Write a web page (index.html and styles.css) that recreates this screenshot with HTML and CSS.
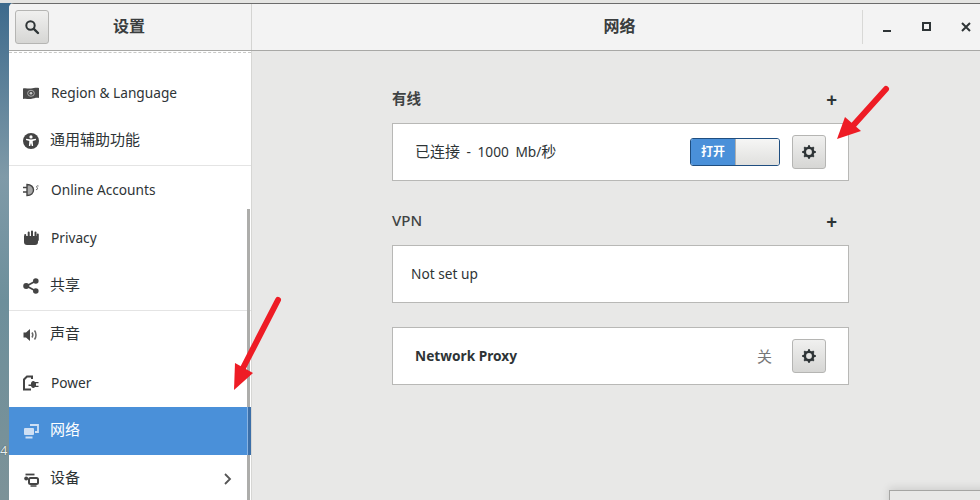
FILE: index.html
```html
<!DOCTYPE html>
<html lang="zh">
<head>
<meta charset="utf-8">
<title>设置 - 网络</title>
<link rel="stylesheet" href="styles.css">
</head>
<body>
<div class="strip"></div>
<div class="desk">
  <div class="wallpaper"><span class="wall-num">4</span></div>
  <div class="window">
    <header class="titlebar">
      <div class="tb-left">
        <button class="btn search-btn" aria-label="搜索">
          <svg width="16" height="16" viewBox="0 0 16 16"><circle cx="6.500" cy="6.500" r="4.200" fill="none" stroke="#2e3436" stroke-width="2"/><path d="M9.800 9.800L14 14" stroke="#2e3436" stroke-width="2.400" stroke-linecap="round"/></svg>
        </button>
        <span class="tb-title side-title">设置</span>
      </div>
      <div class="tb-right">
        <span class="tb-title main-title">网络</span>
        <div class="wm">
          <svg class="wm-i" width="12" height="12" viewBox="0 0 12 12"><rect x="2" y="9" width="8" height="2" fill="#2e3436"/></svg>
          <svg class="wm-i" width="12" height="12" viewBox="0 0 12 12"><rect x="2" y="2" width="7" height="7" fill="none" stroke="#2e3436" stroke-width="2"/></svg>
          <svg class="wm-i" width="12" height="12" viewBox="0 0 12 12"><path d="M2 2L10 10M10 2L2 10" stroke="#2e3436" stroke-width="2"/></svg>
        </div>
      </div>
    </header>
    <div class="body">
      <nav class="sidebar">
        <div class="row">
          <svg class="ic" width="16" height="16" viewBox="0 0 16 16"><path d="M0 3.500C3 2.500 5 4 8 3.500S13 2.500 16 3v10c-3-.5-5 .5-8 1s-5-1-8 0z" fill="#4a4a4a"/><circle cx="8" cy="8.300" r="1.300" fill="#ccc"/><path d="M4.600 8.300a3.400 3 0 0 1 6.800 0a3.400 3 0 0 1-6.800 0" fill="none" stroke="#aaa"/></svg>
          <span>Region &amp; Language</span>
        </div>
        <div class="row sep">
          <svg class="ic" width="16" height="16" viewBox="0 0 16 16"><circle cx="8" cy="8" r="8" fill="#444"/><circle cx="8" cy="3.900" r="1.600" fill="#fff"/><path d="M3.200 5.800L8 6.600l4.800-.8.3 1.300-3.400 1 .4 5h-1.300L8 10l-.8 3.100H5.900l.4-5-3.400-1z" fill="#fff"/></svg>
          <span class="cjk">通用辅助功能</span>
        </div>
        <div class="row">
          <svg class="ic" width="16" height="16" viewBox="0 0 16 16"><path d="M0 5.500h4M0 10h4" stroke="#444" stroke-width="1.600"/><path d="M4 2.500v11C8 13.500 10.500 11 10.500 8S8 2.500 4 2.500z" fill="#a8a8a8" stroke="#444" stroke-width="1.400"/><path d="M15.500 4c-1.500-.6-2.500.4-1.500 1.500s.5 2.500-1 2" fill="none" stroke="#666"/></svg>
          <span>Online Accounts</span>
        </div>
        <div class="row">
          <svg class="ic" width="16" height="16" viewBox="0 0 16 16"><path d="M1 6h14v6c0 2-1 3-3 3H4c-2 0-3-1-3-3z" fill="#444"/><path d="M2.200 10V5M5.700 8V2.500M9 8V1.500M12.500 8V2.500M14.800 10V4.500" stroke="#444" stroke-width="2" stroke-linecap="round"/></svg>
          <span>Privacy</span>
        </div>
        <div class="row sep">
          <svg class="ic" width="16" height="16" viewBox="0 0 16 16"><path d="M12.800 3L3.500 8l9.300 5" fill="none" stroke="#444" stroke-width="1.700"/><circle cx="12.800" cy="3" r="2.800" fill="#444"/><circle cx="3.200" cy="8" r="3" fill="#444"/><circle cx="12.800" cy="13" r="2.800" fill="#444"/></svg>
          <span class="cjk">共享</span>
        </div>
        <div class="row">
          <svg class="ic" width="16" height="16" viewBox="0 0 16 16"><path d="M0.500 5.500h2.500L7 2v12L3 10.500H.5z" fill="#444"/><path d="M9 5.500c1 1.500 1 3.500 0 5M11.500 3.500c2 2.500 2 6.500 0 9" fill="none" stroke="#666" stroke-width="1.500"/></svg>
          <span class="cjk">声音</span>
        </div>
        <div class="row">
          <svg class="ic" width="16" height="16" viewBox="0 0 16 16"><path d="M9 4V1.500H4L1 4.500V14.500H8" fill="none" stroke="#444" stroke-width="2"/><path d="M8 8a2.500 3.500 0 0 1 4-1h3.500v1.300H13v2.400h2.500V12H12a2.500 3.500 0 0 1-4-1H5.500V9.500H8z" fill="#444"/></svg>
          <span>Power</span>
        </div>
        <div class="row selected">
          <svg class="ic" width="16" height="16" viewBox="0 0 16 16"><path d="M7 2h8v7h-3" fill="none" stroke="#cfe0f4" stroke-width="1.800"/><rect x="1" y="5" width="10" height="7" rx="1" fill="#cfe0f4"/><path d="M2.500 14.500h7" stroke="#cfe0f4" stroke-width="2"/></svg>
          <span class="cjk">网络</span>
          <i class="sel-bar"></i>
        </div>
        <div class="row">
          <svg class="ic" width="16" height="16" viewBox="0 0 16 16"><path d="M2.500 3.500h9" stroke="#444" stroke-width="1.800"/><circle cx="3.200" cy="7.500" r="2" fill="#444"/><rect x="6" y="7" width="9" height="6" rx="1.500" fill="none" stroke="#444" stroke-width="2"/><path d="M7.500 15h6" stroke="#444" stroke-width="1.500"/></svg>
          <span class="cjk">设备</span>
          <svg class="chev" width="10" height="12" viewBox="0 0 10 12"><path d="M2 1l5 5-5 5" fill="none" stroke="#555" stroke-width="1.800"/></svg>
        </div>
        <div class="dash"></div>
        <div class="scrollbar"></div>
      </nav>
      <main class="content">
        <div class="head"><h2 class="cjk">有线</h2><span class="plus">+</span></div>
        <section class="frame">
          <span class="label spaced"><span class="cjk">已连接</span> - 1000 Mb/<span class="cjk">秒</span></span>
          <div class="toggle"><span class="on">打开</span><span class="knob"></span></div>
          <button class="btn gear-btn" aria-label="设置">
            <svg width="16" height="16" viewBox="0 0 16 16"><use href="#gear"/></svg>
          </button>
        </section>
        <div class="head vpn"><h2>VPN</h2><span class="plus">+</span></div>
        <section class="frame"><span class="label notset">Not set up</span></section>
        <section class="frame proxy">
          <span class="label strong">Network Proxy</span>
          <span class="off">关</span>
          <button class="btn gear-btn" aria-label="设置">
            <svg width="16" height="16" viewBox="0 0 16 16"><use href="#gear"/></svg>
          </button>
        </section>
      </main>
    </div>
  </div>
</div>
<div class="popup"></div>
<svg class="defs" width="0" height="0">
  <defs>
    <g id="gear">
      <circle cx="8" cy="8" r="4.200" fill="none" stroke="#2e3436" stroke-width="2.600"/>
      <path d="M8 1.200v13.600M1.200 8h13.600M3.200 3.200l9.600 9.600M12.800 3.200L3.200 12.800" stroke="#2e3436" stroke-width="2" stroke-dasharray="2.500 9 2.500"/>
    </g>
  </defs>
</svg>
<svg class="arrow arrow-a" width="60" height="60" viewBox="0 0 60 60"><path d="M46 4L10 44" stroke="#ee1c25" stroke-width="6" stroke-linecap="round"/><path d="M-3 54L5 32L21 46z" fill="#ee1c25"/></svg>
<svg class="arrow arrow-b" width="60" height="100" viewBox="0 0 60 100"><path d="M50 5L14 75" stroke="#ee1c25" stroke-width="6" stroke-linecap="round"/><path d="M6 95L7 68L25 78z" fill="#ee1c25"/></svg>
</body>
</html>
```
FILE: styles.css
```css
* { box-sizing: border-box; }
html, body { margin: 0; padding: 0; width: 980px; height: 500px; overflow: hidden; }
body {
  position: relative;
  background: #e8e8e7;
  font-family: "Noto Sans", "Noto Sans CJK SC", sans-serif;
  font-size: 13.7px;
  color: #2e3436;
}
.strip { height: 3px; background: #e4e4e2; }
.desk { display: flex; height: 497px; background: #3d6a8c; }
.wallpaper {
  position: relative;
  flex: 0 0 9px;
  background: linear-gradient(180deg, #3d6a8c 0%, #7f9aa8 35%, #6d8f9b 60%, #7c9298 100%);
}
.wall-num { display: block; position: absolute; left: 0; top: 439px; width: 9px; font-size: 13px; line-height: 16px; color: #e8eeee; text-shadow: 0 0 1px #222; }
.window { flex: 1; display: flex; flex-direction: column; min-width: 0; background: #e8e8e7; border-top-left-radius: 5px; overflow: hidden; }
.titlebar {
  display: flex;
  height: 48px;
  flex: 0 0 48px;
  background: #f3f3f3;
  border-top: 1px solid #6b6b6b;
  border-bottom: 1px solid #a8a8a6;
}
.tb-left {
  position: relative;
  flex: 0 0 243px;
  display: flex;
  align-items: center;
  padding-left: 6px;
  border-right: 1px solid #d4d4d2;
}
.tb-right { flex: 1; display: flex; align-items: center; }
.tb-title { font-size: 16px; font-weight: 700; color: #3a3d3e; line-height: 20px; }
.side-title { position: absolute; left: 104px; top: 12px; }
.main-title { flex: 1; text-align: center; padding-left: 125px; margin-top: -2px; }
.wm {
  flex: 0 0 118px;
  height: 34px;
  display: flex;
  align-items: center;
  justify-content: space-between;
  padding: 0 8px 0 18px;
  border-left: 1px solid #d8d8d6;
}
.wm-i { display: block; }
.btn {
  display: flex;
  align-items: center;
  justify-content: center;
  width: 34px;
  height: 34px;
  padding: 0;
  border: 1px solid #b5b5b3;
  border-radius: 3px;
  background: linear-gradient(180deg, #f0f0ef, #d6d6d4);
}
.body { flex: 1; display: flex; min-height: 0; }
.sidebar {
  position: relative;
  flex: 0 0 243px;
  height: 100%;
  overflow: hidden;
  padding-top: 18px;
  background: #fff;
  border-right: 1px solid #d6d6d4;
}
.dash {
  position: absolute;
  left: 0; right: 0; top: 1px;
  border-top: 1px dashed #c9c9c7;
}
.row {
  position: relative;
  display: flex;
  align-items: center;
  height: 48px;
  padding-left: 14px;
  color: #2e3436;
}
.row.sep { height: 49px; padding-bottom: 1px; border-bottom: 1px solid #e4e4e4; }
.row > span { margin-left: 12px; margin-bottom: 2px; }
.row > span.cjk { margin-left: 11px; margin-bottom: 5px; }
.cjk { font-size: 15px; }
.ic { flex: 0 0 16px; display: block; }
.selected { background: #4a90d9; color: #fff; }
.sel-bar { position: absolute; right: 0; top: 0; bottom: 0; width: 4px; background: #3c6fa8; border-left: 1px solid #8ab4e2; z-index: 1; }
.chev { position: absolute; left: 214px; top: 18px; }
.scrollbar { position: absolute; right: 1px; top: 158px; bottom: 0; width: 3px; background: #adadab; }
.content { flex: 1; padding: 0 0 0 140px; min-width: 0; }
.head {
  display: flex;
  align-items: center;
  justify-content: space-between;
  width: 457px;
  height: 20px;
  margin-top: 38px;
  padding-right: 12px;
}
.head h2 { margin: -2px 0 0; font-size: 14.500px; font-weight: 700; color: #3f4344; line-height: 20px; }
.head.vpn { margin-top: 30px; }
.head.vpn h2 { font-weight: 500; font-size: 15px; }
.plus { font-size: 19px; font-weight: 700; color: #2e3436; line-height: 20px; margin-top: 1px; }
.frame {
  display: flex;
  align-items: center;
  width: 457px;
  height: 58px;
  margin-top: 14px;
  padding: 0 22px;
  background: #fff;
  border: 1px solid #b8b8b6;
}
.head + .frame { margin-top: 14px; }
.proxy { margin-top: 24px; }
.label { flex: 1; color: #2e3436; margin-top: -2px; }
.label.spaced { word-spacing: 3px; margin-top: -4px; }
.notset { margin-left: -4px; }
.strong { font-weight: 700; }
.off { color: #777; margin-right: 20px; font-size: 15px; margin-top: -2px; }
.toggle {
  display: flex;
  width: 90px;
  height: 28px;
  margin-right: 12px;
  border: 1px solid #1f4e80;
  border-radius: 3px;
  overflow: hidden;
}
.on {
  flex: 0 0 44px;
  background: #4a90d9;
  color: #fff;
  font-size: 12px;
  font-weight: 700;
  text-align: center;
  line-height: 26px;
}
.knob { flex: 1; background: linear-gradient(180deg, #f6f6f5, #e0e0de); border-left: 1px solid #b0b0ae; }
.popup {
  position: absolute;
  left: 889px; top: 490px;
  width: 100px; height: 20px;
  background: #e8e8e7;
  border: 1px solid #a5a5a3;
  box-shadow: 0 -2px 8px rgba(0,0,0,.12);
}
.defs { position: absolute; }
.arrow { position: absolute; overflow: visible; }
.arrow-a { left: 840px; top: 85px; }
.arrow-b { left: 228px; top: 295px; }
```
